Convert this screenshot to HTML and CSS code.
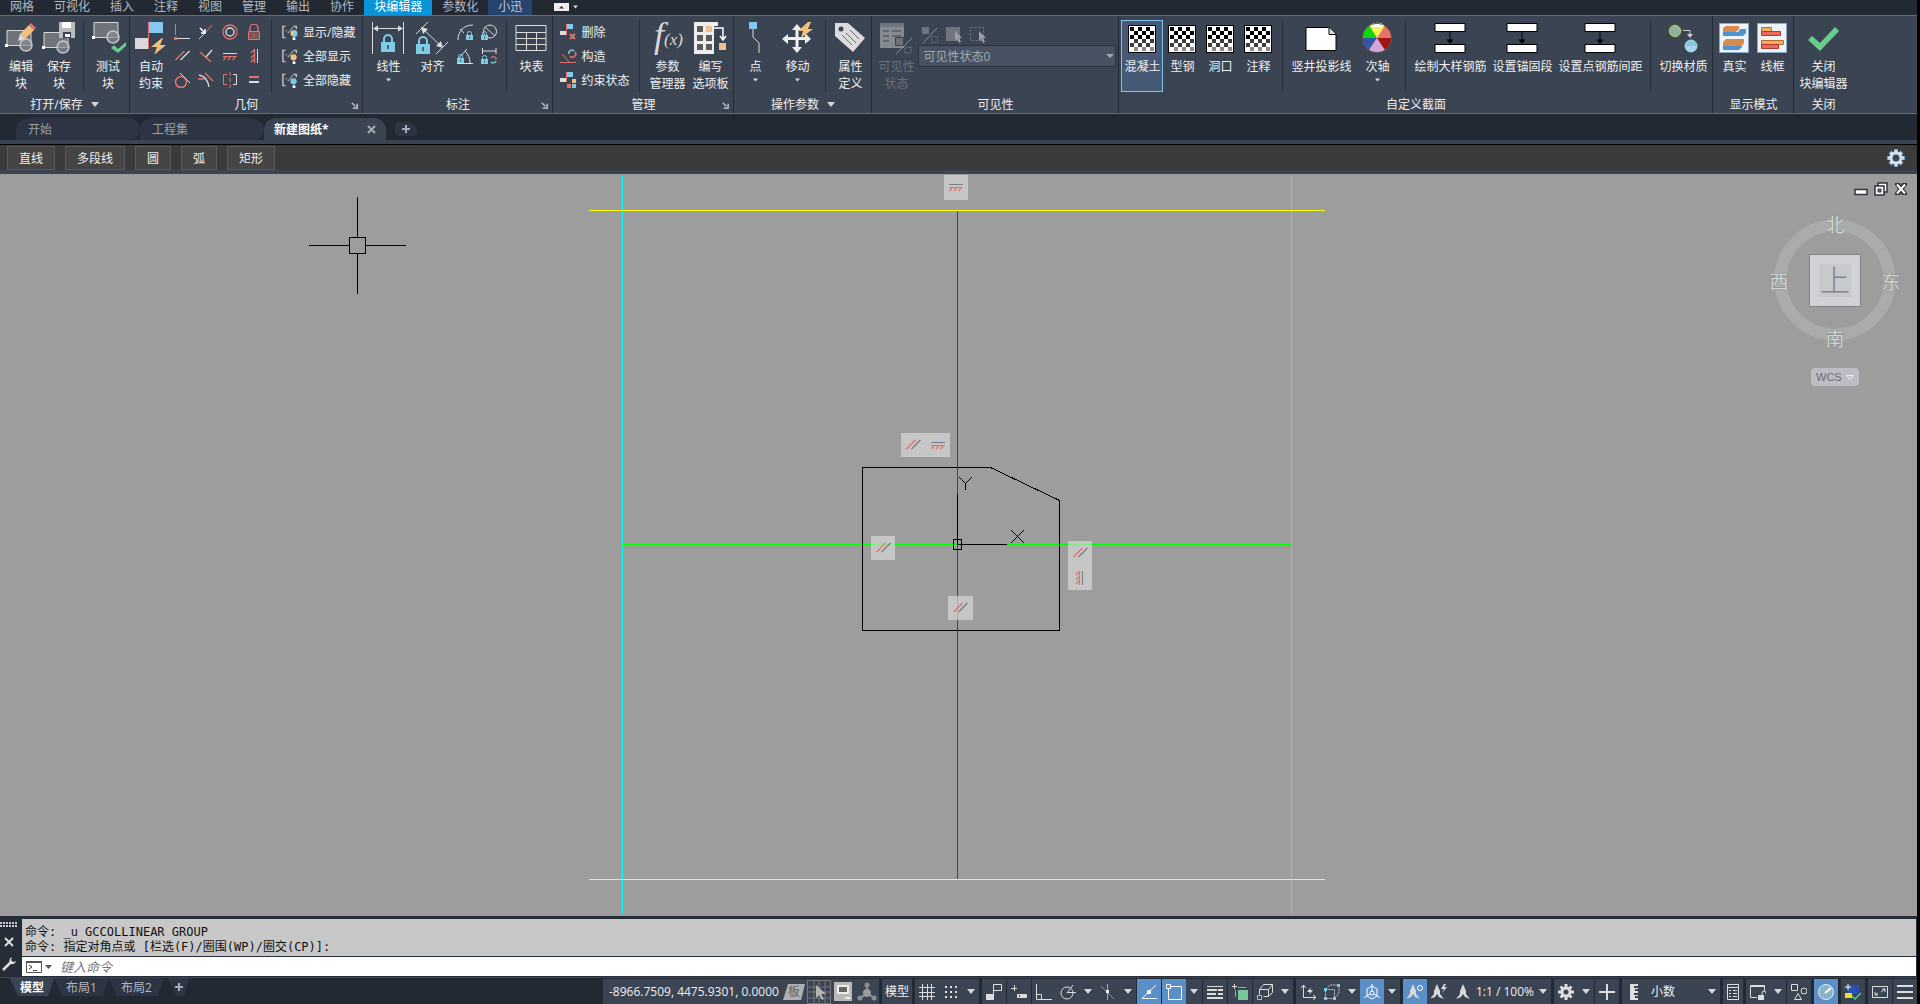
FILE: index.html
```html
<!DOCTYPE html>
<html lang="zh-CN">
<head>
<meta charset="utf-8">
<title>新建图纸</title>
<link rel="stylesheet" href="styles.css">
</head>
<body>
<svg class="defs" aria-hidden="true">
  <defs>
    <symbol id="i-block" viewBox="0 0 32 32"><path d="M2 8.500h24v15h-24z" fill="#6f747c" stroke="#d8d8d8"/><circle cx="21" cy="23" r="6" fill="#8a8f96" fill-opacity=".7" stroke="#c8c8c8" stroke-width="1.500"/><path d="M0 22h3v3H0z" fill="#fff"/></symbol>
    <symbol id="i-lock" viewBox="0 0 14 18"><path d="M3 8V5a4 4 0 0 1 8 0v3" fill="none" stroke="#7ecbe6" stroke-width="2"/><path d="M0 8h14v10H0z" fill="#7ecbe6"/><path d="M7 11v4" stroke="#33404c" stroke-width="1.500"/></symbol>
    <symbol id="i-check" viewBox="0 0 28 28"><path d="M0 0h28v28H0z"/><path d="M1 1h26v26H1z" fill="#fff"/><path d="M2 2h4v4H2zM10 2h4v4h-4zM18 2h4v4h-4zM6 6h4v4H6zM14 6h4v4h-4zM22 6h4v4h-4zM2 10h4v4H2zM10 10h4v4h-4zM18 10h4v4h-4z"/><path d="M6 14h4v4H6zM14 14h4v4h-4zM22 14h4v4h-4zM2 18h4v4H2zM10 18h4v4h-4zM18 18h4v4h-4z" fill="#3c3c3c"/><path d="M6 22h4v4H6zM14 22h4v4h-4zM22 22h4v4h-4z" fill="#8a8a8a"/></symbol>
    <symbol id="i-span" viewBox="0 0 32 32"><path d="M1 1.500h30v8H1zM1 22.500h30v8H1z" fill="#fff" stroke="#000"/><path d="M16 10v9" stroke="#000"/><path d="M12.500 17.500h7L16 22z"/></symbol>
    <symbol id="i-flag" viewBox="0 0 32 32"><path d="M14 0h14v11H14z" fill="#85c8f2"/><path d="M0 16h13v11H0z" fill="#d9d9d9"/><path d="M13.500 0v27" stroke="#e4716b"/><path d="M27 16L16 25h6l-3 8 12-10h-6l3-7z" fill="#f2c27c"/></symbol>
    <symbol id="i-par" viewBox="0 0 16 16"><path d="M1.500 12l9-9" stroke="#e4716b" stroke-width="1.300"/><path d="M6.500 12l9-9" stroke="currentColor" stroke-width="1.300"/></symbol>
    <symbol id="i-hor" viewBox="0 0 16 16"><path d="M1 5.500h14" stroke="currentColor"/><path d="M1 8.500h14M4 9l-2.500 3M8.500 9L6 12M13 9l-2.500 3" stroke="#e4716b" stroke-width="1.200" fill="none"/></symbol>
    <symbol id="i-ver" viewBox="0 0 16 16"><path d="M11.500 1v14" stroke="currentColor"/><path d="M8.500 1v14M8 2L5 5M8 7l-3 3M8 11l-3 3" stroke="#e4716b" stroke-width="1.200" fill="none"/></symbol>
    <symbol id="i-show" viewBox="0 0 18 16"><path d="M4 1.500H1v13h3M13 1.500h3V5" fill="none" stroke="#ddd" stroke-width="1.300"/><path d="M3 5l4 4" stroke="#e4716b"/><path d="M7 9l6-7" stroke="#ddd"/><circle cx="13" cy="9.500" r="3.500" fill="currentColor"/><path d="M12 14h3v3h-3z" fill="#fff"/></symbol>
    <symbol id="i-down" viewBox="0 0 8 5"><path d="M0 0h8L4 5z" fill="#d4d7dc"/></symbol>
    <symbol id="i-corner" viewBox="0 0 8 8"><path d="M1 1l4 4M7 2v5H2" fill="none" stroke="#d4d7dc" stroke-width="1.500"/></symbol>
    <symbol id="i-person" viewBox="0 0 16 16"><path d="M8 0l3 7v3l4 5-5-2-2-3-2 3-5 2 4-5V7z" fill="#d9d9d9"/></symbol>
  </defs>
</svg>

<nav class="menu">
  <button>网格</button><button>可视化</button><button>插入</button><button>注释</button><button>视图</button><button>管理</button><button>输出</button><button>协作</button><button class="on">块编辑器</button><button>参数化</button><button class="alt">小迅</button>
  <button class="collapse" aria-label="最小化功能区"><svg width="15" height="8" viewBox="0 0 15 8"><path d="M0 0h15v8H0z" fill="#eee"/><path d="M5 5.500h5L7.500 3z" fill="#333"/></svg><svg width="5" height="4"><use href="#i-down"/></svg></button>
</nav>

<section class="ribbon">
  <div class="panel">
    <div class="tools">
      <button class="big w38"><svg viewBox="0 0 32 32"><use href="#i-block"/><path d="M15 12l9-9 5 5-9 9z" fill="#f2c27c"/><path d="M24 3l2-2 5 5-2 2z" fill="#e4716b"/><path d="M15 12l5 5-7 2z" fill="#ddd"/></svg>编辑<br>块</button>
      <button class="big w38"><svg viewBox="0 0 32 32"><g transform="translate(-1 2)"><use href="#i-block"/></g><path d="M16 0h16v16H16z" fill="#b9bdc0"/><path d="M19 0h9v6h-9z" fill="#fff"/><path d="M20 10h8v6h-8z" fill="#3b4453"/><path d="M22 12h5v3h-5z" fill="#fff"/></svg>保存<br>块</button>
      <i class="sep"></i>
      <button class="big w38"><svg viewBox="0 0 32 32"><g transform="translate(0 -8)"><use href="#i-block"/></g><path d="M19 26l3-3 4 4 8-7v4l-8 7z" fill="#66cf8d"/></svg>测试<br>块</button>
    </div>
    <h2>打开/保存 <svg width="8" height="5"><use href="#i-down"/></svg></h2>
  </div>

  <div class="panel">
    <div class="tools">
      <button class="big w38"><svg viewBox="0 0 32 32"><use href="#i-flag"/></svg>自动<br>约束</button>
      <div class="grid four">
        <button aria-label="垂直"><svg viewBox="0 0 16 16"><path d="M1.500 0v11" stroke="#e4716b"/><path d="M3 14.500h13" stroke="#ddd"/><path d="M0 13h3v3H0z" fill="#e4716b"/></svg></button>
        <button aria-label="重合"><svg viewBox="0 0 16 16"><path d="M1 15l7-7" stroke="#ddd"/><path d="M8 8l6-7" stroke="#e4716b"/><path d="M2 4l5 5M7 5v4H3" stroke="#fff" stroke-width="1.500" fill="none"/></svg></button>
        <button aria-label="同心"><svg viewBox="0 0 16 16" fill="none"><circle cx="8" cy="8" r="7" stroke="#e4716b" stroke-width="1.300"/><circle cx="8" cy="8" r="4" stroke="#ddd" stroke-width="1.300"/></svg></button>
        <button aria-label="固定"><svg viewBox="0 0 16 16"><path d="M4 7V4a4 4 0 0 1 8 0v3" fill="none" stroke="#e4716b" stroke-width="1.300"/><path d="M2.500 7.500h11v8h-11z" fill="#7d5652" stroke="#e4716b"/><path d="M8 10v3" stroke="#e4716b"/></svg></button>
        <button aria-label="平行"><svg><use href="#i-par"/></svg></button>
        <button aria-label="垂足"><svg viewBox="0 0 16 16"><path d="M2 4l11 10" stroke="#e4716b" stroke-width="1.300"/><path d="M8 9l6-7" stroke="#ddd" stroke-width="1.300"/></svg></button>
        <button aria-label="水平"><svg><use href="#i-hor"/></svg></button>
        <button aria-label="竖直"><svg><use href="#i-ver"/></svg></button>
        <button aria-label="相切"><svg viewBox="0 0 16 16" fill="none"><circle cx="7" cy="10" r="5.500" stroke="#e4716b" stroke-width="1.500"/><path d="M6 1l10 10" stroke="#ddd"/></svg></button>
        <button aria-label="平滑"><svg viewBox="0 0 16 16" fill="none"><path d="M1 3c5 1 9 5 10 12" stroke="#ddd" stroke-width="1.300"/><path d="M0 7h6M7 1l8 8" stroke="#e4716b" stroke-width="1.300"/></svg></button>
        <button aria-label="对称"><svg viewBox="0 0 16 16" fill="none"><path d="M5 2.500H1.500v10H5" stroke="#e4716b"/><path d="M11 2.500h3.500v10H11" stroke="#ddd"/><path d="M8 0v16" stroke="#e4716b" stroke-dasharray="4 2"/></svg></button>
        <button aria-label="相等"><svg viewBox="0 0 16 16"><path d="M3 4h10v2H3z" fill="#e4716b"/><path d="M3 9h10v2H3z" fill="#ddd"/></svg></button>
      </div>
      <i class="sep"></i>
      <div class="list">
        <button><svg class="c-yel"><use href="#i-show"/><path d="M12 6a3.500 3.500 0 0 1 0 7z" fill="#7ecbe6"/></svg>显示/隐藏</button>
        <button><svg class="c-yel"><use href="#i-show"/></svg>全部显示</button>
        <button><svg class="c-blu"><use href="#i-show"/></svg>全部隐藏</button>
      </div>
    </div>
    <h2>几何<svg class="corner" width="7" height="7"><use href="#i-corner"/></svg></h2>
  </div>

  <div class="panel">
    <div class="tools">
      <button class="big w46"><svg viewBox="0 0 32 32"><path d="M.500 0v32M31.500 0v32M2 6.500h28" stroke="#ddd"/><path d="M1 6.500l5-3v6zM31 6.500l-5-3v6z" fill="#ddd"/><use href="#i-lock" x="9" y="12" width="14" height="18"/></svg>线性<svg class="more"><use href="#i-down"/></svg></button>
      <button class="big w42"><svg viewBox="0 0 32 32"><path d="M0 12L12 0M20 32l12-12M6 6l20 19" stroke="#ddd"/><path d="M5 5l7 2-5 5zM27 26l-7-2 5-5z" fill="#ddd"/><use href="#i-lock" x="0" y="14" width="14" height="18"/></svg>对齐</button>
      <div class="grid two">
        <button aria-label="半径"><svg viewBox="0 0 16 16"><path d="M1 16C1 7 7 1 16 1M3 5l4 4" fill="none" stroke="#ddd"/><use href="#i-lock" x="9" y="7" width="7" height="9"/></svg></button>
        <button aria-label="直径"><svg viewBox="0 0 16 16"><circle cx="9" cy="7.500" r="6.500" fill="none" stroke="#ddd"/><path d="M4 3l10 9" stroke="#ddd"/><use href="#i-lock" x="0" y="7" width="7" height="9"/></svg></button>
        <button aria-label="角度"><svg viewBox="0 0 16 16"><path d="M0 15.500h16M2 10L10 1M8 3c3 3 5 7 5 12" fill="none" stroke="#ddd"/><use href="#i-lock" x="0" y="6" width="7" height="9"/></svg></button>
        <button aria-label="转换"><svg viewBox="0 0 16 16"><path d="M1.500 0v6M15 0v6M2 3h13" stroke="#ddd"/><use href="#i-lock" x="0" y="7" width="7" height="9"/><path d="M10 10a3 3 0 0 1 5 0v2" fill="none" stroke="#e4716b" stroke-width="1.300"/><path d="M15 13a3 3 0 0 1-5 1" fill="none" stroke="#7ecbe6" stroke-width="1.300"/></svg></button>
      </div>
      <i class="sep"></i>
      <button class="big w38"><svg viewBox="0 0 32 32" fill="none" stroke="#ddd"><path d="M1 3.500h30v25H1zM1 10.500h30M1 16.500h30M1 22.500h30M11.500 10v18M21.500 10v18"/></svg>块表</button>
    </div>
    <h2>标注<svg class="corner" width="7" height="7"><use href="#i-corner"/></svg></h2>
  </div>

  <div class="panel">
    <div class="tools">
      <div class="list">
        <button><svg viewBox="0 0 16 16"><path d="M7 0h6v5H7z" fill="#85c8f2"/><path d="M0 7h6v4H0z" fill="#ddd"/><path d="M6.500 0v11" stroke="#e4716b"/><path d="M10 10l5 5M15 10l-5 5" stroke="#e4716b" stroke-width="2"/></svg>删除</button>
        <button><svg viewBox="0 0 16 16" fill="none"><path d="M0 14.500h16M2 6l7 8" stroke="#e4716b"/><path d="M9 6a3 3 0 0 1 5-3" stroke="#7ecbe6" stroke-width="1.500"/><path d="M15 4a3 3 0 0 1-5 4" stroke="#e4716b" stroke-width="1.500"/></svg>构造</button>
        <button><svg viewBox="0 0 16 16"><path d="M7 0h6v5H7z" fill="#85c8f2"/><path d="M0 6h6v4H0z" fill="#ddd"/><path d="M6.500 0v10" stroke="#e4716b"/><path d="M12 7h4v4h-4z" fill="#f2c27c"/><path d="M7 12h4v4H7z" fill="#e4716b"/><path d="M12 12h4v4h-4z" fill="#7ecbe6"/></svg>约束状态</button>
      </div>
      <i class="sep"></i>
      <button class="big w44"><svg viewBox="0 0 32 32"><text class="fx" x="3" y="25" font-size="36">f</text><text class="fx" x="13" y="23" font-size="17">(x)</text></svg>参数<br>管理器</button>
      <button class="big w42"><svg viewBox="0 0 32 32"><path d="M0 0h24v4h-4v28H0z" fill="#eee"/><path d="M3 4h6v6H3zM3 13h6v6H3zM3 22h6v6H3zM12 13h6v6h-6zM12 22h6v6h-6z" fill="#5a5a5a"/><path d="M12 4h6v6h-6zM25 21h7v7h-7z" fill="#f0c090"/><path d="M20 6h9v11M26 14l3 4 3-4" fill="none" stroke="#fff" stroke-width="1.500"/></svg>编写<br>选项板</button>
    </div>
    <h2>管理<svg class="corner" width="7" height="7"><use href="#i-corner"/></svg></h2>
  </div>

  <div class="panel">
    <div class="tools">
      <button class="big w38"><svg viewBox="0 0 32 32"><path d="M10 0h8v7h-8z" fill="#85c8f2"/><path d="M14 7v8l6 6v10" fill="none" stroke="#ddd"/></svg>点<svg class="more"><use href="#i-down"/></svg></button>
      <button class="big w46"><svg viewBox="0 0 32 32"><path d="M16 2l5 6h-3.500v7H24v-4l6 6-6 5v-4h-6.500v7H21l-5 6-5-6h3.500v-7H7v4l-6-5 6-5v3h7.500V8H11z" fill="#eee"/><path d="M27 0L17 9h5l-2 7 12-9h-5l3-7z" fill="#f2c27c"/></svg>移动<svg class="more"><use href="#i-down"/></svg></button>
      <i class="sep"></i>
      <button class="big w38"><svg viewBox="0 0 32 32"><path d="M1 1h13l17 15-12 14L1 14z" fill="#dcdcdc"/><circle cx="7" cy="7" r="2.500" fill="#3b4453"/><path d="M16 8l9 9M12 11l10 10M8 13l10 10" stroke="#667"/></svg>属性<br>定义</button>
    </div>
    <h2>操作参数 <svg width="8" height="5"><use href="#i-down"/></svg></h2>
  </div>

  <div class="panel">
    <div class="tools">
      <button class="big w44" disabled><svg viewBox="0 0 32 32"><path d="M0 1h24v25H0z" fill="#858a92"/><path d="M0 1h24v4H0z" fill="#70757e"/><path d="M3 9h6M3 14h6M3 19h6M12 9h9M12 14h9" stroke="#3b4453"/><path d="M15.500 15.500h8v8h-8z" fill="#6b7079" stroke="#3b4453"/><path d="M16 32L32 16" stroke="#858a92"/><path d="M25 25h6v6h-6z" fill="none" stroke="#858a92" stroke-dasharray="1 1"/></svg>可见性<br>状态</button>
      <div class="vis">
        <div class="row">
          <button disabled aria-label="可见性模式"><svg viewBox="0 0 16 16"><path d="M0 0h7v7H0z" fill="#6f747d"/><path d="M1 16L15 1" stroke="#888d95"/><path d="M9.500 9.500h6v6h-6z" fill="none" stroke="#777c85" stroke-dasharray="1 1"/></svg></button>
          <button disabled aria-label="使可见"><svg viewBox="0 0 16 16"><path d="M0 0h14v14H0z" fill="#6f747d"/><path d="M9 4v10l2-2 2 4 2-1-2-4h3z" fill="#9a9ea6"/></svg></button>
          <button disabled aria-label="使不可见"><svg viewBox="0 0 16 16"><path d="M.500.500h13v13H.500z" fill="none" stroke="#777c85" stroke-dasharray="2 2"/><path d="M9 4v10l2-2 2 4 2-1-2-4h3z" fill="#9a9ea6"/></svg></button>
        </div>
        <label class="pick"><select disabled aria-label="可见性状态"><option>可见性状态0</option></select></label>
      </div>
    </div>
    <h2>可见性</h2>
  </div>

  <div class="panel">
    <div class="tools">
      <button class="big w42 sel"><svg class="ck"><use href="#i-check"/></svg>混凝土</button>
      <button class="big w38"><svg class="ck"><use href="#i-check"/></svg>型钢</button>
      <button class="big w38"><svg class="ck"><use href="#i-check"/></svg>洞口</button>
      <button class="big w38"><svg class="ck"><use href="#i-check"/></svg>注释</button>
      <i class="sep"></i>
      <button class="big w66"><svg viewBox="0 0 32 32"><path d="M1 5.500h23l7 7v16H1z" fill="#fff" stroke="#000"/><path d="M24 5.500v7h7" fill="#ddd" stroke="#000"/></svg>竖井投影线</button>
      <button class="big w46"><svg viewBox="0 0 32 32"><circle cx="16" cy="16" r="14.500" fill="#e8736c"/><path d="M16 16L8 3.500a14.500 14.500 0 0 1 16 0z" fill="#f8f25c"/><path d="M10 2.500a14.500 14.500 0 0 1 13 0L20 5h-8z" fill="#fff"/><path d="M16 16H1.500A14.500 14.500 0 0 1 8 3.500z" fill="#0cd80c"/><path d="M16 16L8 28A14.500 14.500 0 0 1 1.500 16z" fill="#3655a8"/><path d="M16 16l8 12a14.500 14.500 0 0 1-16 0z" fill="#d2a8d8"/><path d="M16 16h14.500A14.500 14.500 0 0 1 24 28z" fill="#a01512"/><circle cx="16" cy="16" r="14.700" fill="none" stroke="#555"/></svg>次轴<svg class="more"><use href="#i-down"/></svg></button>
      <i class="sep"></i>
      <button class="big w78"><svg><use href="#i-span"/></svg>绘制大样钢筋</button>
      <button class="big w66"><svg><use href="#i-span"/></svg>设置锚固段</button>
      <button class="big w90"><svg><use href="#i-span"/></svg>设置点钢筋间距</button>
      <i class="sep"></i>
      <button class="big w54"><svg viewBox="0 0 32 32"><circle cx="8" cy="9" r="6.500" fill="#8bb39b" stroke="#3c5a3a" stroke-width="1.500"/><circle cx="8" cy="9" r="5.500" fill="none" stroke="#c8c08a"/><path d="M16 8.500h7v5" fill="none" stroke="#ccc"/><path d="M20 12h6l-3 4z" fill="#ccc"/><circle cx="24" cy="24" r="6" fill="#8cc6de" stroke="#a9dcf0"/><path d="M18.500 24h11a5.500 5.500 0 0 1-11 0z" fill="#a8d8ec"/></svg>切换材质</button>
    </div>
    <h2>自定义截面</h2>
  </div>

  <div class="panel">
    <div class="tools">
      <button class="big w38"><svg viewBox="0 0 32 32"><path d="M1.500 1.500h29v29h-29z" fill="#edf3f7" stroke="#8ea9c8"/><path d="M5 10V6l3-2h13v3l-3 3z" fill="#d98b4e"/><path d="M5 14v-4h15l2-3h6v4l-3 3z" fill="#4c93d0"/><path d="M5 24v-4l3-3h18v4l-2 3z" fill="#d98b4e"/><path d="M5 28v-4h19v1l-3 3z" fill="#4c93d0"/></svg>真实</button>
      <button class="big w38"><svg viewBox="0 0 32 32"><path d="M1.500 1.500h29v29h-29z" fill="#edf3f7" stroke="#8ea9c8"/><path d="M5.500 5.500h10v4h-10zM5.500 18.500h22v4h-22z" fill="#f0b060" stroke="#b8702c"/><path d="M5.500 9.500h19v4h-19zM5.500 22.500h17v4h-17z" fill="#ea6a5c" stroke="#b03a2c"/></svg>线框</button>
    </div>
    <h2>显示模式</h2>
  </div>

  <div class="panel last">
    <div class="tools">
      <button class="big w58"><svg viewBox="0 0 32 32"><path d="M1 18l4-4 8 7L28 5l4 4-19 20z" fill="#66cf8d"/></svg>关闭<br>块编辑器</button>
    </div>
    <h2>关闭</h2>
  </div>
</section>

<nav class="docs">
  <button>开始</button>
  <button>工程集</button>
  <button class="on">新建图纸*<svg width="9" height="9" viewBox="0 0 9 9"><path d="M1 1l7 7M8 1L1 8" stroke="#a8acb3" stroke-width="2"/></svg></button>
  <button class="add" aria-label="新建"><svg width="10" height="10" viewBox="0 0 10 10"><path d="M5 1v8M1 5h8" stroke="#a8acb3" stroke-width="2"/></svg></button>
</nav>

<div class="quick">
  <button>直线</button><button>多段线</button><button>圆</button><button>弧</button><button>矩形</button>
  <button class="gear" aria-label="设置"><svg width="18" height="18" viewBox="0 0 18 18"><path d="M9 0v18M0 9h18M3 3l12 12M15 3L3 15" stroke="#6f9fd0" stroke-width="4"/><path d="M9 1v16M1 9h16M3.500 3.500l11 11M14.500 3.500l-11 11" stroke="#d5e2ee" stroke-width="3"/><circle cx="9" cy="9" r="5" fill="#3a4654" stroke="#d5e2ee" stroke-width="3"/></svg></button>
</div>

<main class="canvas">
  <svg class="drawing" viewBox="0 174 1917 742" fill="none">
    <g shape-rendering="crispEdges">
      <path d="M622.500 176v737M1291.500 176v737" stroke="#0ff"/>
      <path d="M589 210.500h736M589 879.500h736" stroke="#ff0"/>
      <path d="M957.500 211v668" stroke="#c41208"/>
      <path d="M622 544.500h669" stroke="#0f0"/>
      <path d="M862.500 467.500h128l69 33v130h-197z" stroke="#000"/>
      <g stroke="#000">
        <path d="M957.500 494v50M957 544.500h50M953.500 539.500h8v10h-8z"/>
        <path d="M959 477l6.500 6.500 6.500-6.500M965.500 483v7M1011 530l13 13M1024 530l-13 13"/>
        <path d="M309 245.500h40M366 245.500h40M357.500 197v40M357.500 254v40M349.500 237.500h16v16h-16z"/>
      </g>
    </g>
    <g class="marks">
      <path d="M944 175h24v25h-24zM901 433h49v24h-49zM871 536h24v24h-24zM948 596h25v24h-25zM1068 541h24v49h-24z" fill="#dcdcdc" fill-opacity=".65"/>
      <use href="#i-hor" x="948" y="179" width="16" height="16"/>
      <use href="#i-par" x="905" y="437" width="16" height="16"/>
      <use href="#i-hor" x="930" y="437" width="16" height="16"/>
      <use href="#i-par" x="875" y="540" width="16" height="16"/>
      <use href="#i-par" x="952" y="600" width="16" height="16"/>
      <use href="#i-par" x="1072" y="545" width="16" height="16"/>
      <use href="#i-ver" x="1071" y="570" width="16" height="16"/>
    </g>
  </svg>

  <div class="winctl">
    <button aria-label="最小化"><svg viewBox="0 0 14 14"><path d="M1 7.500h12v5H1z" fill="#fff" stroke="#32323c" stroke-width="1.500"/></svg></button>
    <button aria-label="还原"><svg viewBox="0 0 14 14"><path d="M4 1h9v9H4z" fill="#fff" stroke="#32323c" stroke-width="1.500"/><path d="M1 4h9v9H1z" fill="#fff" stroke="#32323c" stroke-width="1.500"/><path d="M4 7h3v3H4z" fill="#777" stroke="#32323c"/></svg></button>
    <button aria-label="关闭"><svg viewBox="0 0 14 14"><path d="M1 1h5l1 2 1-2h5v2l-3 4 3 4v2H8l-1-2-1 2H1v-2l3-4-3-4z" fill="#32323c"/><path d="M3 2.500l8 9M11 2.500l-8 9" stroke="#fff" stroke-width="2"/></svg></button>
  </div>

  <div class="cube">
    <svg width="132" height="142" viewBox="0 0 132 142"><circle cx="66" cy="71" r="54.500" fill="none" stroke="#a9acaa" stroke-width="12"/><path d="M40.500 45.500h51v52h-51z" fill="#d1d2d5" stroke="#818286"/><path d="M50 55h32v33H50z" fill="#c8c9cb"/>
    <g class="dir"><text x="66" y="23">北</text><text x="10" y="80">西</text><text x="122" y="80">东</text><text x="66" y="137">南</text></g><text class="face" x="66" y="82">上</text></svg>
    <button>WCS<svg width="8" height="5" viewBox="0 0 8 5"><path d="M.500.500h7L4 4.500z" fill="none" stroke="#eee"/></svg></button>
  </div>
</main>

<section class="cmd">
  <div class="grip">
    <svg width="18" height="5"><path d="M0 1h18M0 4h18" stroke="#ccc" stroke-width="2" stroke-dasharray="2 1"/></svg>
    <button aria-label="关闭"><svg width="10" height="10" viewBox="0 0 10 10"><path d="M1 1l8 8M9 1L1 9" stroke="#ddd" stroke-width="2"/></svg></button>
    <button aria-label="自定义"><svg width="14" height="14" viewBox="0 0 14 14"><path d="M1 13l8-8" stroke="#ddd" stroke-width="2.500"/><path d="M10 0a4 4 0 0 0-1 7 4 4 0 0 0 5-3l-3 1-2-2z" fill="#ddd"/></svg></button>
  </div>
  <div class="term">
    <p>命令: _u GCCOLLINEAR GROUP</p>
    <p>命令: 指定对角点或 [栏选(F)/圈围(WP)/圈交(CP)]:</p>
    <label class="entry"><svg width="26" height="12" viewBox="0 0 26 12"><path d="M.500.500h15v11H.500z" fill="#fff" stroke="#555"/><path d="M0 0h16v2H0z" fill="#555"/><path d="M3 4l3 2-3 2M7 9.500h4" fill="none" stroke="#444"/><path d="M19 4h7l-3.500 4z" fill="#555"/></svg><input type="text" placeholder="键入命令" aria-label="键入命令"></label>
  </div>
</section>

<footer class="foot">
  <nav class="sheets">
    <button class="on">模型</button><button>布局1</button><button>布局2</button><button class="plus" aria-label="新建布局"><svg width="10" height="10" viewBox="0 0 10 10"><path d="M5 1v8M1 5h8" stroke="#a8acb3" stroke-width="2"/></svg></button>
  </nav>
  <div class="status">
    <div class="seg">
      <span class="coord">-8966.7509, 4475.9301, 0.0000</span>
      <button class="wide" aria-label="板"><svg width="22" height="16" viewBox="0 0 22 16"><path d="M5 0h17l-4 16H0z" fill="#aeb0b2"/><text x="11" y="12" class="ban">板</text></svg></button>
      <button aria-label="选择"><svg class="full" viewBox="0 0 24 24"><path d="M.500.500h23v23H.500zM0 7h24M0 12h24M0 18h24M7 0v24M12 0v24M18 0v24" fill="none" stroke="#77797c"/><path d="M9 5l10 9h-5l3 5-2 1-3-5-3 3z" fill="#b5b5b5"/></svg></button>
      <button aria-label="面板"><svg class="full" viewBox="0 0 24 24"><path d="M3 2h18v19H3z" fill="#b9b9b6"/><path d="M6 5h12v9H6z" fill="#eee"/><path d="M8 7h8v5H8z" fill="#666"/><path d="M14 17h5v2h-5z" fill="#eee"/></svg></button>
      <button aria-label="坐标"><svg class="full" viewBox="0 0 24 24"><path d="M12 4v9M12 13l-7 5M12 13l7 5" stroke="#8c8e92" stroke-width="2"/><circle cx="12" cy="13" r="4" fill="#999b9f"/><circle cx="12" cy="5" r="2.500" fill="#8c8e92"/><circle cx="5" cy="18" r="2.500" fill="#8c8e92"/><circle cx="19" cy="18" r="2.500" fill="#8c8e92"/></svg></button>
    </div>
    <div class="seg"><button class="t30">模型</button></div>
    <div class="seg">
      <button aria-label="栅格"><svg viewBox="0 0 16 16"><path d="M3.500 0v16M8.500 0v16M12.500 0v16M0 3.500h16M0 8.500h16M0 12.500h16" stroke="#ddd"/></svg></button>
      <button aria-label="捕捉"><svg viewBox="0 0 16 16"><path d="M2 3h12M2 8h12M2 13h12" stroke="#ddd" stroke-width="2" stroke-dasharray="2 3"/></svg></button>
      <button class="arr" aria-label="选项"><svg><use href="#i-down"/></svg></button>
    </div>
    <div class="seg split">
      <button aria-label="推断"><svg viewBox="0 0 16 16"><path d="M7.500.500h8v6h-8z" fill="none" stroke="#ddd"/><path d="M7.500 1v15" stroke="#ddd"/><path d="M0 10h7v6H0z" fill="#ddd"/></svg></button>
      <button aria-label="动态输入"><svg viewBox="0 0 16 16"><path d="M3.500 1v6M0 4.500h6" stroke="#ddd"/><path d="M6.500 10.500h9v3h-9z" fill="#ddd" stroke="#ddd"/><path d="M8.500 11v2" stroke="#333"/></svg></button>
      <span><button aria-label="正交"><svg viewBox="0 0 16 16"><path d="M.500 0v15.500H16M.500 10.500h5v5" fill="none" stroke="#ddd"/></svg></button><button aria-label="极轴"><svg viewBox="0 0 16 16"><circle cx="7" cy="9" r="6" fill="none" stroke="#ddd"/><path d="M7 8.500h9M7 9l6-8" stroke="#ddd"/></svg></button><button class="arr" aria-label="选项"><svg><use href="#i-down"/></svg></button><button aria-label="等轴测"><svg viewBox="0 0 16 16"><path d="M1 2l13 13" stroke="#e4716b"/><path d="M7.500 0v16" stroke="#66cf8d"/><path d="M6 6h3v3H6z" fill="#eee"/></svg></button><button class="arr" aria-label="选项"><svg><use href="#i-down"/></svg></button></span>
      <button class="on" aria-label="追踪"><svg viewBox="0 0 16 16"><path d="M15 1L1 14.500h15" fill="none" stroke="#fff"/><path d="M6 6h4v4H6z" fill="#fff"/></svg></button>
      <span><button class="on" aria-label="对象捕捉"><svg viewBox="0 0 16 16"><path d="M2.500 2.500h13v13h-13z" fill="none" stroke="#fff"/><path d="M.500.500h4v4h-4z" fill="#5a8fc8" stroke="#fff"/></svg></button><button class="arr" aria-label="选项"><svg><use href="#i-down"/></svg></button></span>
      <button aria-label="线宽"><svg viewBox="0 0 16 16"><path d="M0 2.500h16" stroke="#ddd"/><path d="M0 6h10M11 6h5M0 10h9M11 10h5M0 14h16" stroke="#ddd" stroke-width="2"/></svg></button>
      <button aria-label="透明"><svg viewBox="0 0 16 16"><path d="M2.500 0v5M0 2.500h5" stroke="#ddd"/><path d="M6 6h10v10H6z" fill="#78c79a"/><path d="M3.500 6v7M6 3.500h8" stroke="#66cf8d"/></svg></button>
      <span><button aria-label="循环选择"><svg viewBox="0 0 16 16" fill="none" stroke="#ddd"><path d="M2.500 5.500l4-5h9v8l-4 4h-5M2.500 5.500h9v7M11.500 5.500l4-5M2.500 5.500v5"/><path d="M.500 11.500h4v4h-4z" stroke="#f2a96c"/></svg></button><button class="arr" aria-label="选项"><svg><use href="#i-down"/></svg></button></span>
    </div>
    <div class="seg">
      <button aria-label="动态UCS"><svg viewBox="0 0 16 16"><path d="M3.500 1v12.500H16M1 4l2.500-3L6 4M13 11l3 2.500L13 16" fill="none" stroke="#ddd"/><path d="M11 3L7 8h3l-1 3 4-5h-3z" fill="#ddd"/></svg></button>
      <button aria-label="过滤"><svg viewBox="0 0 16 16"><path d="M1.500 5.500h9v9h-9zM2 5l4-4h9v8l-4 5" fill="none" stroke="#ccc" stroke-dasharray="2 1"/><path d="M0 4h3v3H0zM0 13h3v3H0zM9 13h3v3H9zM13 0h3v3h-3z" fill="#7ecbe6"/></svg></button>
      <button class="arr" aria-label="选项"><svg><use href="#i-down"/></svg></button>
      <button class="on" aria-label="小控件"><svg viewBox="0 0 16 16" fill="none" stroke="#fff"><path d="M8 0v8M6 10l-6 4M10 10l6 4M8 2L3 5v7l5 3 5-3V5z"/><circle cx="8" cy="9" r="2"/></svg></button>
      <button class="arr" aria-label="选项"><svg><use href="#i-down"/></svg></button>
    </div>
    <div class="seg">
      <button class="on" aria-label="注释可见"><svg viewBox="0 0 16 16"><use href="#i-person" x="-2"/><circle cx="13" cy="4" r="2.500" fill="none" stroke="#fff"/></svg></button>
      <button aria-label="自动缩放"><svg viewBox="0 0 16 16"><use href="#i-person" x="-2"/><path d="M13 0l-3 5h3l-2 4 5-6h-3l2-3z" fill="#ddd"/></svg></button>
      <button aria-label="注释比例"><svg><use href="#i-person"/></svg></button>
      <button class="txt scale">1:1 / 100%</button>
      <button class="arr" aria-label="选项"><svg><use href="#i-down"/></svg></button>
    </div>
    <div class="seg split">
      <span><button aria-label="工作空间"><svg viewBox="0 0 16 16"><path d="M8 0v16M0 8h16M2.500 2.500l11 11M13.500 2.500l-11 11" stroke="#ddd" stroke-width="3"/><circle cx="8" cy="8" r="4" fill="#3b4453" stroke="#ddd" stroke-width="3"/></svg></button><button class="arr" aria-label="选项"><svg><use href="#i-down"/></svg></button></span>
      <button aria-label="注释监视器"><svg viewBox="0 0 16 16"><path d="M8 0v16M0 8h16" stroke="#ddd" stroke-width="2"/></svg></button>
    </div>
    <div class="seg">
      <button aria-label="单位"><svg viewBox="0 0 16 16"><path d="M4 0h8v2H8v2h4v1H9v2h3v2H8v2h4v1H9v2h3v2H4z" fill="#ddd"/></svg></button>
      <button class="txt">小数</button>
      <button class="arr" aria-label="选项"><svg><use href="#i-down"/></svg></button>
    </div>
    <div class="seg"><button class="w20" aria-label="快捷特性"><svg viewBox="0 0 16 16"><path d="M2.500.500h11v15h-11zM2 3.500h12" fill="none" stroke="#ddd"/><path d="M4 6.500h2M8 6.500h4M4 9.500h2M8 9.500h4M4 12.500h2M8 12.500h4" stroke="#ddd"/></svg></button></div>
    <div class="seg split">
      <span><button aria-label="锁定界面"><svg viewBox="0 0 16 16"><path d="M7 13.500H.500V1.500h14V7M0 2.500h15" fill="none" stroke="#ddd"/><path d="M8 11h6v5H8z" fill="#ddd"/><path d="M12 11V9a2 2 0 0 1 4 0v1" fill="none" stroke="#ddd"/></svg></button><button class="arr" aria-label="选项"><svg><use href="#i-down"/></svg></button></span>
      <button aria-label="隔离对象"><svg viewBox="0 0 16 16" fill="none" stroke="#ddd"><path d="M.500.500h6v6h-6zM7 9.500l3.500 6h-7z"/><circle cx="13" cy="7" r="3"/></svg></button>
    </div>
    <div class="seg"><button class="on" aria-label="图形性能"><svg viewBox="0 0 16 16"><circle cx="8" cy="8" r="7.500" fill="#87b2c9" stroke="#e8eef2"/><path d="M7 9l6-5" stroke="#fff" stroke-width="2"/></svg></button></div>
    <div class="seg"><button aria-label="校对"><svg viewBox="0 0 16 16"><path d="M3 1h11v9H3z" fill="#2b4fb0"/><path d="M3 0v6M0 3h6" stroke="#fff"/><path d="M0 9h7v5H0z" fill="#f4dc2c"/><path d="M7 12l3 3 6-6" fill="none" stroke="#45d087" stroke-width="1.500"/></svg></button></div>
    <div class="seg split">
      <button aria-label="全屏"><svg viewBox="0 0 16 16"><path d="M.500 2.500h15v11H.500z" fill="none" stroke="#ddd"/><path d="M3 8v3h3M10 5h3v3M9 8l4-3M3 11l3-2" fill="none" stroke="#ddd"/></svg></button>
      <button aria-label="自定义"><svg viewBox="0 0 16 16"><path d="M0 2h16M0 8h16M0 14h16" stroke="#ddd" stroke-width="2"/></svg></button>
    </div>
  </div>
</footer>
</body>
</html>
```
FILE: styles.css
```css
* { box-sizing: border-box; }
html { background: #000; }
body {
  margin: 0 3px 0 0;
  min-height: 100vh;
  display: flex;
  flex-direction: column;
  background: #222933;
  color: #f0f0f0;
  font: 12px/17px "Open Sans", "Noto Sans CJK SC", sans-serif;
  overflow: hidden;
}
button {
  font: inherit;
  color: inherit;
  background: none;
  border: 0;
  padding: 0;
  white-space: nowrap;
}
svg { display: block; flex: none; }
h2, p { margin: 0; font: inherit; }
.defs { position: absolute; width: 0; height: 0; }

/* Menu strip */
.menu {
  display: flex;
  height: 15px;
  color: #b4b9c0;
}
.menu button { padding: 0 10px 2px; line-height: 13px; height: 15px; }
.menu .on { background: #0a93d8; color: #fff; }
.menu .alt { background: #27446f; color: #c5cad2; }
.menu .collapse {
  display: flex;
  align-items: center;
  gap: 4px;
  margin-left: 12px;
}

/* Ribbon */
.ribbon {
  display: flex;
  height: 99px;
  border-top: 1px solid #0a8bd0;
  border-bottom: 1px solid #0a8bd0;
  background: #3b4453;
  overflow: hidden;
}
.panel {
  display: flex;
  flex-direction: column;
  flex: none;
  padding: 4px 2px 0;
  border-right: 1px solid #222933;
}
.panel.last { border: 0; padding: 4px 0 0; }
.tools { display: flex; height: 76px; }
.panel h2 {
  position: relative;
  display: flex;
  align-items: center;
  justify-content: center;
  gap: 8px;
  line-height: 17px;
}
.corner { position: absolute; right: 2px; top: 6px; }
.sep { width: 1px; height: 72px; margin: 0 5px; background: #262d38; flex: none; }
.big {
  display: flex;
  flex-direction: column;
  align-items: center;
  justify-content: flex-start;
  height: 72px;
  padding-top: 2px;
  text-align: center;
}
.big > svg { width: 32px; height: 32px; margin-bottom: 4px; overflow: visible; }
.big > svg.ck { width: 28px; height: 28px; margin: 3px 0 5px; }
.big > svg.more { width: 5px; height: 4px; margin: 3px 0 0; }
.big:disabled { color: #6b717c; }
.big.sel { background: #475a75; box-shadow: inset 0 0 0 1px #7fc2ee; }
.w38 { width: 38px; }
.w42 { width: 42px; }
.w44 { width: 44px; }
.w46 { width: 46px; }
.w54 { width: 54px; }
.w58 { width: 58px; }
.w66 { width: 66px; }
.w78 { width: 78px; }
.w90 { width: 90px; }
.grid { display: grid; grid-auto-rows: 24px; color: #ddd; }
.grid.four { grid-template-columns: repeat(4, 24px); }
.grid.two { grid-template-columns: repeat(2, 24px); }
.grid button { display: grid; place-items: center; }
.grid svg { width: 16px; height: 16px; }
.list { padding: 0 5px; }
.list button { display: flex; align-items: center; gap: 5px; height: 24px; }
.list svg { width: 16px; height: 16px; overflow: visible; }
.c-yel { color: #f2c27c; }
.c-blu { color: #7ecbe6; }
.fx { font-family: "Liberation Serif", serif; font-style: italic; fill: #d8d8d8; }
.vis .row { display: flex; gap: 8px; height: 25px; padding: 4px 4px 0; }
.vis .row svg { width: 16px; height: 16px; }
.pick { position: relative; display: block; }
.pick select {
  appearance: none;
  display: block;
  width: 198px;
  height: 22px;
  padding: 0 4px;
  border: 1px solid #2b3340;
  border-radius: 0;
  background: #485263;
  color: #a4a9b1;
  font: inherit;
  opacity: 1;
}
.pick::after {
  content: "";
  position: absolute;
  right: 2px;
  top: 9px;
  border: 4px solid transparent;
  border-top-color: #a4a9b1;
  border-bottom: 0;
}

/* Document tabs */
.docs {
  display: flex;
  height: 30px;
  padding: 4px 0 0 16px;
  border-bottom: 4px solid #3b4453;
  color: #9aa0a8;
}
.docs button {
  width: 124px;
  padding: 0 12px;
  text-align: left;
  background: #2d3443;
  border-radius: 12px 12px 10px 0;
}
.docs .on {
  display: flex;
  align-items: center;
  justify-content: space-between;
  width: 122px;
  padding: 0 10px;
  background: #3b4453;
  color: #fff;
  font-weight: 700;
  border-radius: 12px 12px 0 0;
}
.docs .add {
  display: grid;
  place-items: center;
  align-self: center;
  width: 22px;
  height: 14px;
  padding: 0;
  margin-left: 9px;
  border-radius: 4px 10px 4px 4px;
}

/* Shape shortcuts */
.quick {
  display: flex;
  align-items: center;
  gap: 10px;
  height: 30px;
  padding: 1px 12px 0 7px;
  background: #3b3b3b;
  border-top: 1px solid #000;
  border-bottom: 4px solid #3b4453;
}
.quick button { height: 24px; padding: 0 11px; background: #454545; border: 1px solid #5a5a5a; }
.quick .gear { margin-left: auto; padding: 0; border: 0; background: none; display: grid; place-items: center; }

/* Drawing area */
.canvas { position: relative; flex: 1; min-height: 0; background: #9d9d9d; overflow: hidden; }
.drawing { position: absolute; inset: 0; width: 100%; height: 100%; }
.marks { color: #7a7c86; }
.winctl { position: absolute; right: 9px; top: 8px; display: flex; gap: 6px; }
.winctl svg { width: 14px; height: 14px; }
.cube { position: absolute; right: 16px; top: 35px; width: 132px; }
.dir { font-size: 19px; text-anchor: middle; fill: #d0d3d2; stroke: #8a8c8c; stroke-width: 1px; paint-order: stroke; }
.face { font-size: 30px; text-anchor: middle; fill: #7f8587; font-weight: 300; }
.cube button {
  display: flex;
  align-items: center;
  justify-content: space-between;
  width: 48px;
  height: 18px;
  margin: 17px 0 0 42px;
  padding: 0 5px;
  border-radius: 4px;
  background: #bdbdc5;
  color: #66686c;
  font: 11px "Liberation Sans", sans-serif;
}

/* Command window */
.cmd { display: flex; height: 61px; padding: 3px 1px 1px 0; background: #262d39; }
.grip {
  display: flex;
  flex-direction: column;
  align-items: center;
  justify-content: space-between;
  width: 22px;
  padding: 3px 4px 5px 0;
}
.term {
  flex: 1;
  padding-top: 6px;
  background: #c7c8c7;
  color: #111;
  font: 12px/15px "DejaVu Sans Mono", "Noto Sans CJK SC", monospace;
}
.term p { padding-left: 3px; }
.entry {
  display: flex;
  align-items: center;
  gap: 8px;
  height: 20px;
  margin-top: 1px;
  padding-left: 4px;
  background: #fff;
  border-top: 1px solid #262d39;
}
.entry input {
  flex: 1;
  padding: 0;
  border: 0;
  outline: 0;
  background: none;
  font: italic 13px/18px "Noto Sans CJK SC", sans-serif;
}
.entry input::placeholder { color: #777; }

/* Bottom bar */
.foot { display: flex; justify-content: space-between; height: 27px; border-top: 1px solid #3b4453; }
.sheets { display: flex; padding-left: 10px; height: 18px; color: #b4b9c0; }
.sheets button {
  height: 18px;
  padding: 0 12px;
  background: #2d3443;
  clip-path: polygon(0 0, 100% 0, calc(100% - 6px) 100%, 8px 100%);
}
.sheets .on { padding: 0 10px; background: #3b4453; color: #fff; font-weight: 700; }
.sheets .plus { padding: 0 6px; margin-left: 4px; }
.status { display: flex; gap: 3px; padding-top: 1px; }
.seg, .seg span { display: flex; }
.split { gap: 1px; }
.seg > *, .seg span > button { background: #3b4453; }
.seg button { display: grid; place-items: center; width: 24px; height: 25px; }
.seg svg { width: 16px; height: 16px; }
.seg .full { width: 24px; height: 24px; }
.seg .coord { width: 178px; padding-left: 6px; align-items: center; white-space: nowrap; }
.seg .wide { width: 26px; }
.seg .wide svg { width: 22px; }
.seg .w20 { width: 20px; }
.seg .t30 { width: 30px; }
.seg .txt { width: 58px; justify-content: start; padding-left: 5px; }
.seg .scale { width: 60px; justify-content: center; padding: 0; }
.seg .arr { width: 16px; }
.seg .arr svg { width: 8px; height: 5px; }
.seg .on, .seg span > .on { background: #5a8fc8; }
.ban { font-size: 12px; text-anchor: middle; fill: #666; }
```
